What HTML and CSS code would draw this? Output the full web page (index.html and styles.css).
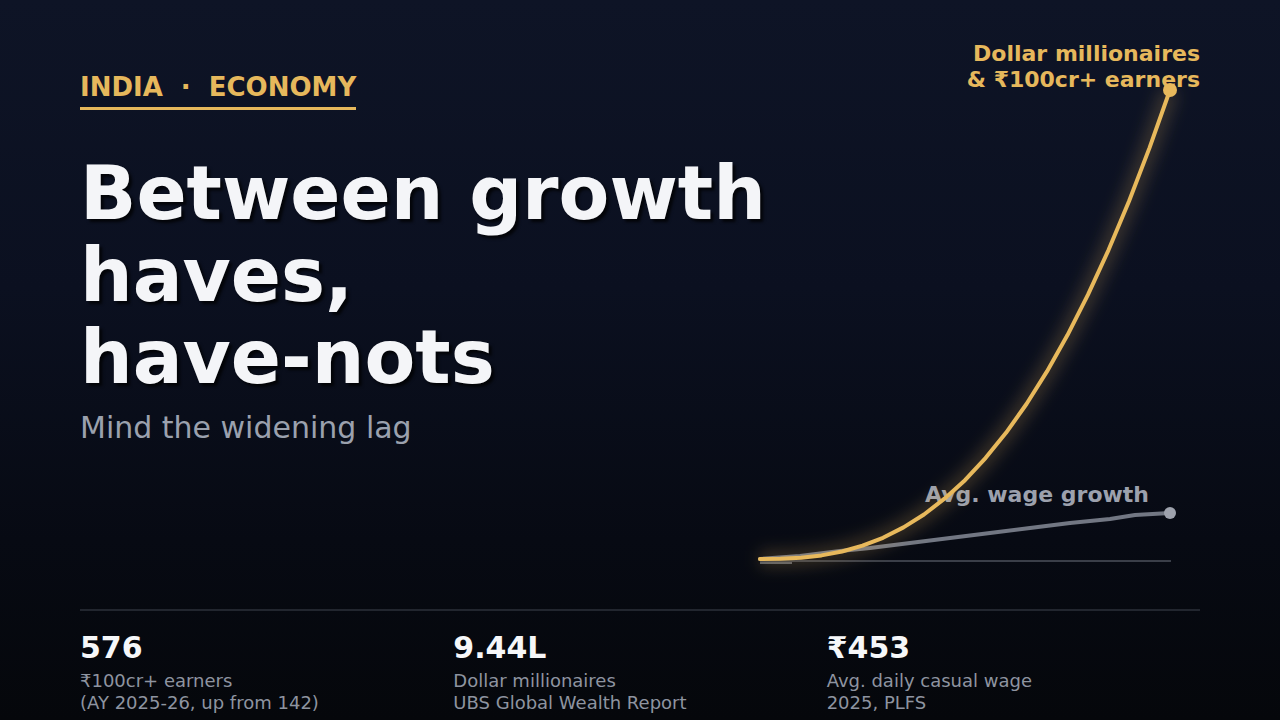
FILE: index.html
```html
<!DOCTYPE html>
<html lang="en">
<head>
<meta charset="utf-8">
<title>Between growth haves, have-nots</title>
<link rel="stylesheet" href="styles.css">
</head>
<body>
<main class="page">
  <section class="hero">
    <div class="kicker">INDIA<span class="sep">·</span>ECONOMY</div>
    <h1 class="title">Between growth<br>haves,<br>have-nots</h1>
    <p class="subtitle">Mind the widening lag</p>

    <svg class="chart" viewBox="740 30 480 560" width="480" height="560" aria-label="Growth chart">
      <defs>
        <filter id="glow" x="-50%" y="-50%" width="200%" height="200%">
          <feGaussianBlur stdDeviation="8"/>
        </filter>
      </defs>
      <text class="lbl-gold" x="1200" y="61" text-anchor="end">Dollar millionaires</text>
      <text class="lbl-gold" x="1200" y="87" text-anchor="end">&amp; ₹100cr+ earners</text>
      <text class="lbl-gray" x="1149" y="502" text-anchor="end">Avg. wage growth</text>

      <line class="axis" x1="760" y1="561" x2="1171" y2="561"/>
      <line class="axis-tick" x1="760" y1="563" x2="792" y2="563"/>

      <polyline class="wage" points="760,559 800,556 840,551 870,548 910,543 950,538 990,533 1030,528 1070,523 1110,519 1135,515 1170,513"/>
      <circle class="wage-dot" cx="1170" cy="513" r="6"/>

      <polyline class="rich-glow" filter="url(#glow)" points="760,559 780.5,558.8 801,557.7 821.5,555.4 842,551.5 862.5,545.7 883,537.8 903.5,527.4 924,514.5 944.5,498.7 965,480.2 985.5,458.1 1006,432.8 1026.5,404 1047,371.4 1067.5,335.1 1088,294.7 1108.5,250.1 1129,201.2 1149.5,147.9 1170,90"/>
      <polyline class="rich" points="760,559 780.5,558.8 801,557.7 821.5,555.4 842,551.5 862.5,545.7 883,537.8 903.5,527.4 924,514.5 944.5,498.7 965,480.2 985.5,458.1 1006,432.8 1026.5,404 1047,371.4 1067.5,335.1 1088,294.7 1108.5,250.1 1129,201.2 1149.5,147.9 1170,90"/>
      <circle class="rich-dot" cx="1170" cy="90" r="7"/>
    </svg>
  </section>

  <section class="stats">
    <div class="stat">
      <div class="num">576</div>
      <div class="cap">₹100cr+ earners<br>(AY 2025-26, up from 142)</div>
    </div>
    <div class="stat">
      <div class="num">9.44L</div>
      <div class="cap">Dollar millionaires<br>UBS Global Wealth Report</div>
    </div>
    <div class="stat">
      <div class="num">₹453</div>
      <div class="cap">Avg. daily casual wage<br>2025, PLFS</div>
    </div>
  </section>
</main>
</body>
</html>
```

FILE: styles.css
```css
* { box-sizing: border-box; }

html, body {
  margin: 0;
  padding: 0;
  width: 1280px;
  height: 720px;
  overflow: hidden;
}

body {
  font-family: "DejaVu Sans", "Noto Sans", sans-serif;
  background: linear-gradient(180deg, #0e1426 0%, #0b1020 40%, #070a13 75%, #05070b 100%);
  color: #f4f5f8;
}

.page {
  position: relative;
  height: 720px;
  padding: 72px 80px 0;
  display: flex;
  flex-direction: column;
}

.hero {
  flex: 1;
}

.kicker {
  display: inline-block;
  font-size: 26px;
  line-height: 30px;
  font-weight: 700;
  color: #e6b85c;
  padding-bottom: 5px;
  border-bottom: 3px solid #e6b85c;
}

.kicker .sep {
  margin: 0 18px;
}

.title {
  margin: 42px 0 0;
  font-size: 74px;
  line-height: 82px;
  font-weight: 700;
  color: #f4f5f8;
  text-shadow: 3px 3px 3px rgba(0, 0, 0, 0.75);
}

.subtitle {
  margin: 12px 0 0;
  font-size: 30px;
  line-height: 36px;
  color: #9ba1ae;
}

.chart {
  position: absolute;
  left: 740px;
  top: 30px;
  overflow: visible;
}

.lbl-gold {
  font-family: "DejaVu Sans", sans-serif;
  font-weight: 700;
  font-size: 22px;
  fill: #e6b85c;
}

.lbl-gray {
  font-family: "DejaVu Sans", sans-serif;
  font-weight: 700;
  font-size: 22px;
  fill: #9ca1ad;
}

.axis {
  stroke: #3a3e48;
  stroke-width: 2;
}

.axis-tick {
  stroke: #a9adb5;
  stroke-width: 1;
}

.wage {
  fill: none;
  stroke: #727783;
  stroke-width: 4;
  stroke-linejoin: round;
  stroke-linecap: round;
}

.wage-dot { fill: #9ea2ad; }

.rich-glow {
  fill: none;
  stroke: #e6b85c;
  stroke-opacity: 0.22;
  stroke-width: 16;
  stroke-linejoin: round;
}

.rich {
  fill: none;
  stroke: #e8b95c;
  stroke-width: 4;
  stroke-linejoin: round;
  stroke-linecap: round;
}

.rich-dot { fill: #e8b95c; }

.stats {
  display: grid;
  grid-template-columns: repeat(3, 1fr);
  border-top: 2px solid #22262f;
  padding: 19px 0 6px;
}

.num {
  font-size: 30px;
  line-height: 36px;
  font-weight: 700;
  color: #f6f7f9;
}

.cap {
  margin-top: 4px;
  font-size: 18px;
  line-height: 22px;
  color: #8e94a0;
}
```
